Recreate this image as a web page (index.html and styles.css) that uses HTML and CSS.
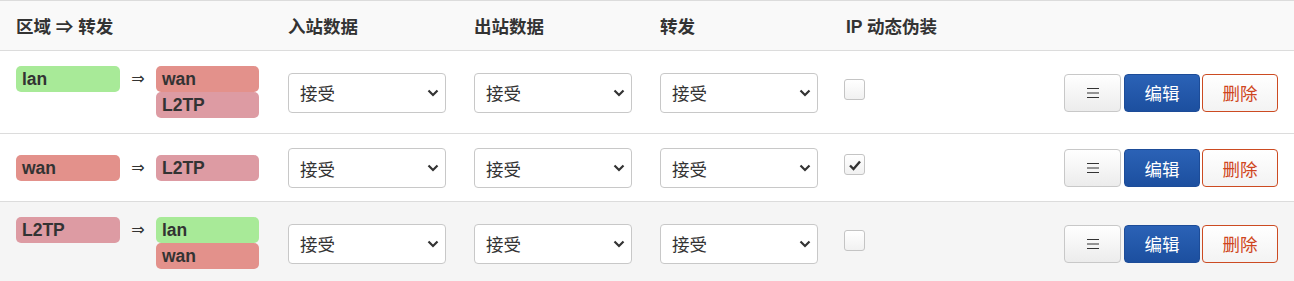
FILE: index.html
```html
<!DOCTYPE html>
<html lang="zh">
<head>
<meta charset="utf-8">
<title>Zone forwarding</title>
<link rel="stylesheet" href="styles.css">
</head>
<body>
<div class="table">
  <div class="row head">
    <div class="cell zone-col">区域 ⇒ 转发</div>
    <div class="cell">入站数据</div>
    <div class="cell">出站数据</div>
    <div class="cell">转发</div>
    <div class="cell mask-col">IP 动态伪装</div>
    <div class="cell"></div>
  </div>

  <div class="row">
    <div class="cell zone-col">
      <div class="zones">
        <span class="badge lan">lan</span>
        <span class="arrow">⇒</span>
        <div class="dests">
          <span class="badge wan">wan</span>
          <span class="badge l2tp">L2TP</span>
        </div>
      </div>
    </div>
    <div class="cell"><div class="select">接受<svg class="chev" viewBox="0 0 12 8"><path d="M1.5 1.5 6 6 10.5 1.5"/></svg></div></div>
    <div class="cell"><div class="select">接受<svg class="chev" viewBox="0 0 12 8"><path d="M1.5 1.5 6 6 10.5 1.5"/></svg></div></div>
    <div class="cell"><div class="select">接受<svg class="chev" viewBox="0 0 12 8"><path d="M1.5 1.5 6 6 10.5 1.5"/></svg></div></div>
    <div class="cell mask-col"><span class="check"></span></div>
    <div class="cell actions">
      <button class="btn menu"><svg viewBox="0 0 14 12"><path d="M1 1.5h12M1 6h12M1 10.5h12"/></svg></button>
      <button class="btn edit">编辑</button>
      <button class="btn del">删除</button>
    </div>
  </div>

  <div class="row">
    <div class="cell zone-col">
      <div class="zones">
        <span class="badge wan">wan</span>
        <span class="arrow">⇒</span>
        <div class="dests">
          <span class="badge l2tp">L2TP</span>
        </div>
      </div>
    </div>
    <div class="cell"><div class="select">接受<svg class="chev" viewBox="0 0 12 8"><path d="M1.5 1.5 6 6 10.5 1.5"/></svg></div></div>
    <div class="cell"><div class="select">接受<svg class="chev" viewBox="0 0 12 8"><path d="M1.5 1.5 6 6 10.5 1.5"/></svg></div></div>
    <div class="cell"><div class="select">接受<svg class="chev" viewBox="0 0 12 8"><path d="M1.5 1.5 6 6 10.5 1.5"/></svg></div></div>
    <div class="cell mask-col"><span class="check checked"><svg viewBox="0 0 14 12"><path d="M2 6.5 5.5 10 12 2.5"/></svg></span></div>
    <div class="cell actions">
      <button class="btn menu"><svg viewBox="0 0 14 12"><path d="M1 1.5h12M1 6h12M1 10.5h12"/></svg></button>
      <button class="btn edit">编辑</button>
      <button class="btn del">删除</button>
    </div>
  </div>

  <div class="row striped">
    <div class="cell zone-col">
      <div class="zones">
        <span class="badge l2tp">L2TP</span>
        <span class="arrow">⇒</span>
        <div class="dests">
          <span class="badge lan">lan</span>
          <span class="badge wan">wan</span>
        </div>
      </div>
    </div>
    <div class="cell"><div class="select">接受<svg class="chev" viewBox="0 0 12 8"><path d="M1.5 1.5 6 6 10.5 1.5"/></svg></div></div>
    <div class="cell"><div class="select">接受<svg class="chev" viewBox="0 0 12 8"><path d="M1.5 1.5 6 6 10.5 1.5"/></svg></div></div>
    <div class="cell"><div class="select">接受<svg class="chev" viewBox="0 0 12 8"><path d="M1.5 1.5 6 6 10.5 1.5"/></svg></div></div>
    <div class="cell mask-col"><span class="check"></span></div>
    <div class="cell actions">
      <button class="btn menu"><svg viewBox="0 0 14 12"><path d="M1 1.5h12M1 6h12M1 10.5h12"/></svg></button>
      <button class="btn edit">编辑</button>
      <button class="btn del">删除</button>
    </div>
  </div>
</div>
</body>
</html>
```

FILE: styles.css
```css
html, body {
  margin: 0;
  padding: 0;
  background: #fff;
}
body {
  font-family: "Liberation Sans", "Noto Sans CJK SC", sans-serif;
  font-size: 17.5px;
  color: #333;
}
.table {
  border-top: 1px solid #dcdcdc;
}
.row {
  display: grid;
  grid-template-columns: 272px 186px 186px 186px 1fr auto;
  align-items: center;
  border-bottom: 1px solid #dcdcdc;
  padding: 14px 0 13px;
  background: #fff;
}
.row.head {
  padding: 0;
  height: 49px;
  background: #f9f9f9;
  font-weight: bold;
  color: #333;
}
.row.striped {
  background: #f5f5f5;
}
.cell {
  padding-left: 16px;
}
.zone-col {
  padding-top: 1px;
  padding-bottom: 2px;
}
.row.head .zone-col {
  padding: 0 0 0 16px;
}
.zones {
  display: flex;
  align-items: flex-start;
}
.badge {
  display: block;
  width: 104px;
  height: 26px;
  line-height: 26px;
  box-sizing: border-box;
  padding-left: 6px;
  border-radius: 5px;
  font-weight: bold;
  font-size: 17.5px;
  color: #333;
}
.dests .badge {
  width: 103px;
}
.lan { background: #a8ea98; }
.wan { background: #e3918b; }
.l2tp { background: #dd9ba3; }
.arrow {
  width: 36px;
  text-align: center;
  line-height: 26px;
  font-size: 16px;
  font-family: "DejaVu Sans", sans-serif;
  color: #333;
}
.dests {
  display: flex;
  flex-direction: column;
}
.select {
  width: 158px;
  height: 40px;
  box-sizing: border-box;
  border: 1px solid #c8c8c8;
  border-radius: 4px;
  background: #fff;
  display: flex;
  align-items: center;
  justify-content: space-between;
  padding: 0 6px 0 11px;
  font-family: "Noto Sans CJK SC", sans-serif;
  font-size: 17.5px;
  color: #333;
}
.chev {
  width: 12px;
  height: 8px;
  fill: none;
  stroke: #333;
  stroke-width: 2.2;
}
.check {
  display: flex;
  align-items: center;
  justify-content: center;
  width: 21px;
  height: 21px;
  margin-left: -2px;
  margin-bottom: 7px;
  box-sizing: border-box;
  border: 1px solid #c4c4c4;
  border-radius: 3px;
  background: linear-gradient(#fff, #f1f1f1);
}
.check svg {
  width: 14px;
  height: 12px;
  fill: none;
  stroke: #333;
  stroke-width: 2.4;
}
.actions {
  display: flex;
  padding-right: 16px;
}
.btn {
  height: 38px;
  box-sizing: border-box;
  border-radius: 4px;
  font-family: "Noto Sans CJK SC", sans-serif;
  font-size: 17.5px;
  padding: 0;
  display: flex;
  align-items: center;
  justify-content: center;
}
.menu {
  width: 57px;
  margin-right: 3px;
  border: 1px solid #c8c8c8;
  background: linear-gradient(#fff, #ececec);
}
.menu svg {
  width: 14px;
  height: 12px;
  fill: none;
  stroke: #333;
  stroke-width: 1.2;
}
.edit {
  width: 76px;
  margin-right: 2px;
  border: 1px solid #1d4c98;
  background: linear-gradient(#2b62b6, #1c4f9f);
  color: #fff;
}
.del {
  width: 76px;
  border: 1px solid #cc4b22;
  background: linear-gradient(#fff, #f3f3f3);
  color: #cf4520;
}
```
